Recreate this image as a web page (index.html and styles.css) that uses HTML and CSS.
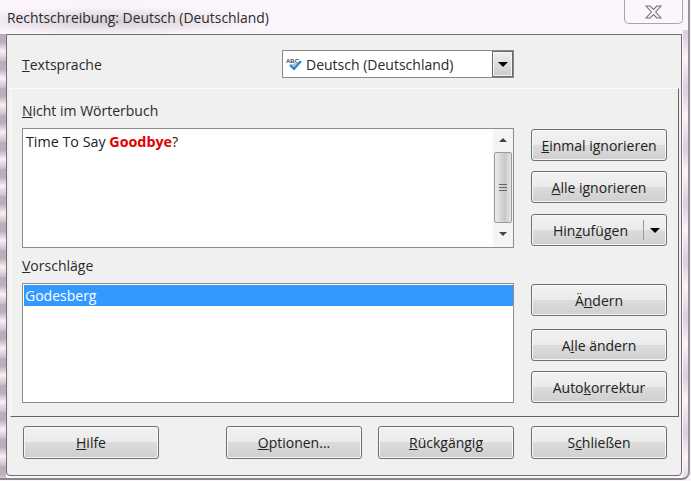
FILE: index.html
```html
<!DOCTYPE html>
<html lang="de">
<head>
<meta charset="utf-8">
<title>Rechtschreibung</title>
<link rel="stylesheet" href="styles.css">
</head>
<body>
<div class="window">
  <header class="titlebar">
    <span class="title">Rechtschreibung: Deutsch (Deutschland)</span>
    <div class="close">
      <svg width="17" height="14" viewBox="0 0 17 14"><path d="M1 1h4.2l3.3 3.4L11.8 1H16l-5.3 6 5.3 6h-4.2L8.5 9.6 5.2 13H1l5.3-6z" fill="#f4f0f3" stroke="#77777a" stroke-width="1.1"/></svg>
    </div>
  </header>
  <main class="panel">
    <div class="lang-row">
      <label class="label lang-label"><u>T</u>extsprache</label>
      <div class="combo">
        <svg class="abc" width="18" height="15" viewBox="0 0 18 15"><text x="0" y="6" class="abc-text">ABC</text><path d="M4 8l4 4 7-8" fill="#9cc8ec" stroke="#2f7fc4" stroke-width="2"/></svg>
        <span class="combo-text">Deutsch (Deutschland)</span>
        <span class="combo-btn"><i class="tri"></i></span>
      </div>
    </div>
    <section class="sheet">
      <div class="field-top">
        <div class="label field-label"><u>N</u>icht im Wörterbuch</div>
        <div class="box textbox">
          <div class="text-content">Time To Say <b class="err">Goodbye</b>?</div>
          <div class="scroll">
            <i class="arrow-up"></i>
            <div class="thumb"><span class="grip"></span></div>
            <i class="arrow-down"></i>
          </div>
        </div>
      </div>
      <div class="actions actions-top">
        <button class="btn"><u>E</u>inmal ignorieren</button>
        <button class="btn"><u>A</u>lle ignorieren</button>
        <button class="btn split nudge"><span class="split-label">Hin<u>z</u>ufügen</span><span class="split-arrow"><i class="tri"></i></span></button>
      </div>
      <div class="field-bottom">
        <div class="label field-label-2"><u>V</u>orschläge</div>
        <div class="box listbox">
          <div class="selected">Godesberg</div>
        </div>
      </div>
      <div class="actions actions-bottom">
        <button class="btn">Ä<u>n</u>dern</button>
        <button class="btn wide-gap">A<u>l</u>le ändern</button>
        <button class="btn">Auto<u>k</u>orrektur</button>
      </div>
    </section>
    <footer class="footer">
      <button class="btn foot"><u>H</u>ilfe</button>
      <button class="btn foot foot-opt"><u>O</u>ptionen...</button>
      <button class="btn foot"><u>R</u>ückgängig</button>
      <button class="btn foot foot-last">S<u>c</u>hließen</button>
    </footer>
  </main>
</div>
</body>
</html>
```
FILE: styles.css
```css
* { box-sizing: border-box; }
html, body { margin: 0; padding: 0; }
body {
  width: 691px;
  height: 481px;
  overflow: hidden;
  background: #fbf5fb;
  font-family: "Open Sans", "Noto Sans", sans-serif;
  font-size: 14px;
  color: #222;
}
.window {
  width: 690px;
  height: 480px;
  background-color: #fbf5fb;
  background-image:
    repeating-linear-gradient(180deg, rgba(120,105,120,.5) 0 8px, rgba(235,220,232,.2) 17px, rgba(120,105,120,.4) 27px),
    repeating-linear-gradient(180deg, rgba(190,175,190,.5) 0 6px, rgba(250,244,250,0) 28px, rgba(190,175,190,.5) 57px),
    radial-gradient(ellipse 150px 14px at 110px 21px, rgba(140,130,140,.35), rgba(140,130,140,0));
  background-size: 6px 100%, 5px 100%, 100% 34px;
  background-position: 0 34px, 683px 30px, 0 0;
  background-repeat: no-repeat;
  border-right: 2px solid #97949a;
  border-bottom: 2px solid #8a878c;
  border-bottom-right-radius: 8px;
}
.titlebar {
  height: 34px;
  padding-left: 7px;
  display: flex;
  justify-content: space-between;
  align-items: flex-start;
}
.title {
  font-size: 13.9px;
  line-height: 18px;
  margin-top: 9px;
  color: #2b2b2b;
}
.close {
  width: 59px;
  height: 24px;
  margin-right: 5px;
  border: 1px solid #a9a6a9;
  border-top: 0;
  border-radius: 0 0 5px 5px;
  display: flex;
  align-items: center;
  justify-content: center;
  background: #fbf6fb;
}
.panel {
  width: 676px;
  height: 442px;
  margin-left: 6px;
  background: #f0f0f0;
  border: 1px solid #6e6e6e;
  border-radius: 0 0 4px 4px;
  display: flex;
  flex-direction: column;
}
.label { line-height: 20px; color: #2a2a2a; }
.lang-row {
  height: 53px;
  padding: 15px 0 0 15px;
  display: flex;
  align-items: flex-start;
}
.lang-label { width: 260px; padding-top: 5px; }
.combo {
  width: 232px;
  height: 28px;
  background: #fff;
  border: 1px solid #8a8a8a;
  display: flex;
  align-items: center;
  padding-left: 3px;
}
.abc { flex: none; }
.abc-text { font-size: 6px; font-weight: 700; fill: #3b4a5a; font-family: "Liberation Sans", sans-serif; }
.combo-text { margin-left: 2px; flex: 1; color: #2a2a2a; }
.combo-btn {
  width: 21px;
  height: 26px;
  border: 1px solid #6a6a6a;
  box-shadow: inset 0 0 0 1px #f5f5f5;
  background: linear-gradient(#efefef, #cbcbcb);
  display: flex;
  align-items: center;
  justify-content: center;
}
.tri {
  display: block;
  width: 0;
  height: 0;
  border-left: 5px solid transparent;
  border-right: 5px solid transparent;
  border-top: 5px solid #000;
}
.sheet {
  height: 329px;
  margin: 0 2px 0 3px;
  border: 1px solid;
  border-color: #fafafa #666 #666 #fafafa;
  padding-left: 11px;
  display: grid;
  grid-template-columns: 492px 136px;
  grid-template-rows: 159px 155px;
  column-gap: 17px;
}
.field-label { height: 39px; padding-top: 12px; }
.field-label-2 { height: 35px; padding-top: 8px; }
.box {
  height: 120px;
  background: #fff;
  border: 1px solid #8d8d8d;
}
.textbox { display: flex; }
.text-content { flex: 1; padding: 3px 3px; font-size: 14.3px; line-height: 20px; color: #222; }
.err { color: #e00000; font-weight: 700; }
.scroll {
  width: 20px;
  flex: none;
  background: #f4f4f4;
  display: flex;
  flex-direction: column;
  align-items: center;
  padding-top: 9px;
}
.arrow-up, .arrow-down { display: block; width: 0; height: 0; border-left: 4px solid transparent; border-right: 4px solid transparent; }
.arrow-up { border-bottom: 4px solid #444; }
.arrow-down { border-top: 4px solid #444; }
.thumb {
  width: 18px;
  height: 71px;
  margin: 10px 0 9px;
  border: 1px solid #9a9a9a;
  border-radius: 2px;
  background: linear-gradient(90deg, #ececec, #d2d2d2 45%, #c8c8c8 60%, #e6e6e6);
  display: flex;
  align-items: center;
  justify-content: center;
}
.grip {
  width: 8px;
  height: 7px;
  border-top: 1px solid #666;
  border-bottom: 1px solid #666;
  background: linear-gradient(#666, #666) center / 100% 1px no-repeat;
}
.actions { display: flex; flex-direction: column; gap: 10px; }
.actions-top { padding-top: 40px; }
.actions-bottom { padding-top: 36px; }
.btn {
  height: 32px;
  width: 136px;
  flex: none;
  padding: 0;
  font: inherit;
  color: #222;
  border: 1px solid #707070;
  border-radius: 3px;
  background: linear-gradient(#f2f2f2 0, #ebebeb 49%, #dcdcdc 50%, #cfcfcf 100%);
  box-shadow: inset 0 0 0 1px #f7f7f7;
}
.nudge { margin-top: 1px; }
.wide-gap { margin-top: 3px; }
.split { display: flex; align-items: center; }
.split-label { flex: 1; padding-left: 6px; }
.split-arrow {
  width: 23px;
  height: 20px;
  border-left: 1px solid #9a9a9a;
  display: flex;
  align-items: center;
  justify-content: center;
}
.listbox { padding: 1px 0 0 1px; }
.selected {
  height: 21px;
  line-height: 21px;
  padding-left: 1px;
  background: #3399ff;
  color: #fff;
}
.footer {
  padding: 9px 0 0 16px;
  display: flex;
  gap: 16px;
}
.foot { height: 33px; }
.foot-opt { margin-left: 51px; }
.foot-last { margin-left: 1px; }
```
